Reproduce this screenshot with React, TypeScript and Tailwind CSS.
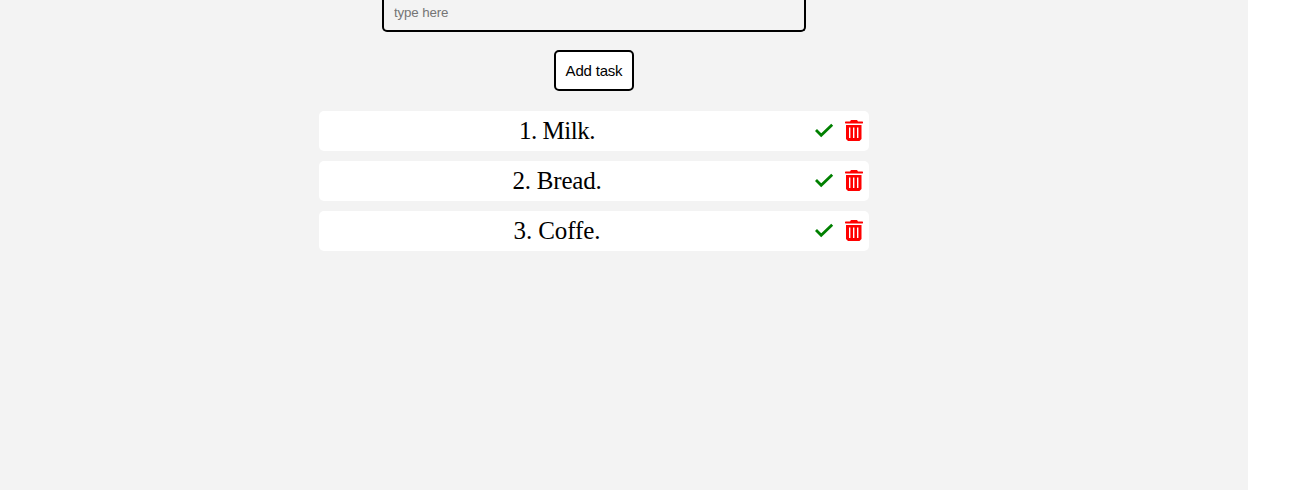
import React from "react";

const tasks = [
  { name: "Milk", tracking: "tracking-[-0.5px]" },
  { name: "Bread", tracking: "tracking-[-0.2px]" },
  { name: "Coffe", tracking: "tracking-[-0.08px]" },
];

function CheckIcon() {
  return (
    <svg viewBox="0 0 20 20" className="h-5 w-5" fill="none" stroke="#008000" strokeWidth="2.8">
      <path d="M2 9 7.200 14.200 18.200 3.700" />
    </svg>
  );
}

function TrashIcon() {
  return (
    <svg viewBox="0 0 18 21" className="h-[21px] w-[18px] fill-[#ff0000]">
      <path d="M6 0h6l1 1.500h4.500l.5.500v1l-.5.500H.5L0 3V2l.5-.5H5z" />
      <path fillRule="evenodd" d="M1 5h15.500v14l-1 1-1 1H3l-1-1-1-1zM4 7.500v10.500h1.400V7.500zM8 7.500v10.500h1.400V7.500zM12 7.500v10.500h1.400V7.500z" />
    </svg>
  );
}

export default function App() {
  return (
    <div className="h-[502px] overflow-hidden bg-white font-['Liberation_Sans',sans-serif]">
      <main className="flex h-[490px] w-[1248px] flex-col items-center bg-[#f3f3f3] pr-[60px]">
        <div className="flex h-8 w-[424px] shrink-0 items-start rounded-b-[5px] border-2 border-t-0 border-black px-2.5">
          <input placeholder="type here" className="mt-[5px] h-4 w-full bg-transparent text-[13.333px] leading-4 tracking-[-0.15px] outline-none placeholder:text-[#757575]" />
        </div>
        <button className="mt-[18px] h-[41px] w-20 shrink-0 rounded-[5px] border-2 border-black bg-white pt-0.5 text-[15px] tracking-[-0.2px] whitespace-nowrap text-black">Add task</button>
        <ul className="mt-5 flex w-[550px] shrink-0 flex-col gap-2.5">
          {tasks.map((task, i) => (
            <li key={task.name} className="flex h-10 items-center rounded-[5px] bg-white pr-1.5">
              <span className={`flex-1 pr-[19px] text-center font-['Liberation_Serif',serif] text-[25px] text-black ${task.tracking}`}>{i + 1}. {task.name}.</span>
              <button className="mr-[11px] flex"><CheckIcon /></button>
              <button className="mb-px flex"><TrashIcon /></button>
            </li>
          ))}
        </ul>
      </main>
    </div>
  );
}
